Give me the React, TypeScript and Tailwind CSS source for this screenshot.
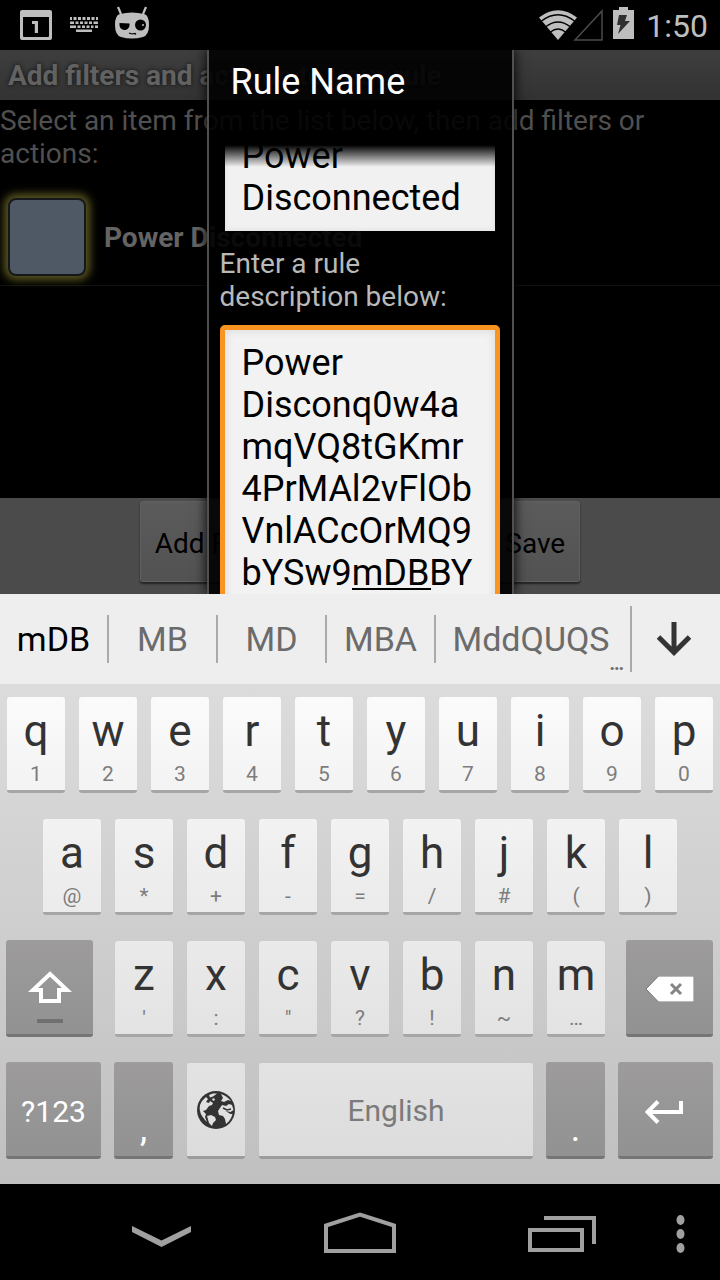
import type { ReactNode } from 'react';

const topRow = [['q', '1'], ['w', '2'], ['e', '3'], ['r', '4'], ['t', '5'], ['y', '6'], ['u', '7'], ['i', '8'], ['o', '9'], ['p', '0']];
const homeRow = [['a', '@'], ['s', '*'], ['d', '+'], ['f', '-'], ['g', '='], ['h', '/'], ['j', '#'], ['k', '('], ['l', ')']];
const bottomRow = [['z', "'"], ['x', ':'], ['c', '"'], ['v', '?'], ['b', '!'], ['n', '~'], ['m', '…']];

function LetterKey({ main, hint, tone }: { main: string; hint: string; tone: string }) {
  return (
    <div className="col-span-2 px-[7px]">
      <button className={`flex h-24 w-full flex-col items-center rounded-[3px] border-b-[3px] border-[#a6a6a6] pt-1 text-[#333] ${tone}`}>
        <span className="text-[44px] leading-[60px]">{main}</span>
        <span className="text-[21px] leading-[26px] text-[#7d7d7d]">{hint}</span>
      </button>
    </div>
  );
}

function DarkKey({ label, className, children }: { label: string; className: string; children: ReactNode }) {
  return (
    <div className={className}>
      <button
        aria-label={label}
        className="-mt-px flex h-[97px] w-full items-center justify-center rounded-[3px] border-b-[3px] border-[#757575] bg-linear-to-b from-[#9d9b9b] to-[#929292] pt-1 text-white"
      >
        {children}
      </button>
    </div>
  );
}

function FooterButton({ children }: { children: ReactNode }) {
  return (
    <button className="h-[81px] rounded-[3px] border border-[#606060] bg-linear-to-b from-[#5b5b5b] to-[#525252] px-3.5 pt-1 text-[28px] text-black shadow-[0_2px_2px_#222]">
      {children}
    </button>
  );
}

function StatusBar() {
  return (
    <header className="flex h-[50px] items-center bg-black pl-5 pr-3 text-[#bebebe]">
      <svg width="32" height="30" viewBox="0 0 32 30" fill="currentColor">
        <path fillRule="evenodd" d="M2 0h28a2 2 0 0 1 2 2v26a2 2 0 0 1-2 2H2a2 2 0 0 1-2-2V2a2 2 0 0 1 2-2Zm1 7v19a1 1 0 0 0 1 1h24a1 1 0 0 0 1-1V7Z" />
        <path d="M12 11h6v12h-3.200V14H12Z" />
      </svg>
      <svg className="ml-[18px]" width="28" height="16" viewBox="0 0 28 16" fill="currentColor">
        <path d="M0 0h2v3H0zM3.500 0h3v3h-3zM8 0h3v3H8zM12.500 0h3v3h-3zM17 0h3v3h-3zM21.500 0h3v3h-3zM26 0h2v3h-2zM0 4.500h4v2.500H0zM5.500 4.500h3V7h-3zM10 4.500h3V7h-3zM14.500 4.500h3V7h-3zM19 4.500h3V7h-3zM23.500 4.500H28V7h-4.500zM0 8.500h6V11H0zM7.500 8.500h3V11h-3zM12 8.500h3V11h-3zM16.500 8.500h3V11h-3zM21 8.500h2.500V11H21zM25 8.500h3V11h-3zM6 12.500h16V15H6z" />
      </svg>
      <svg className="-mt-1 ml-4" width="36" height="34" viewBox="0 0 36 34" fill="none">
        <path d="M4 1l3 7M32 1l-3 7" stroke="currentColor" strokeWidth="2.200" />
        <path d="M6 8Q18 5 30 8Q35 9 35 19Q35 29 29 31Q18 34 7 31Q1 29 1 19Q1 9 6 8Z" fill="currentColor" />
        <path d="M5.500 17l10 .5a5 5.500 0 0 1-10 2Z" fill="#000" />
        <circle cx="26.500" cy="19" r="5.500" fill="#000" />
        <circle cx="29" cy="19" r="1" fill="currentColor" />
        <path d="M15 27l3 1 3-.5 1 1" stroke="#000" strokeWidth="1.200" />
      </svg>
      <div className="flex-1" />
      <svg width="38" height="30" viewBox="0 0 38 30" fill="currentColor">
        <path d="M19 30 0 7.500Q19-7 38 7.500Z" />
        <path d="M2.500 11Q19-1.500 35.500 11M7 16.500Q19 7.500 31 16.500M11.500 22Q19 16 26.500 22" fill="none" stroke="#000" strokeWidth="1.500" />
      </svg>
      <svg className="-ml-1" width="30" height="32" viewBox="0 0 30 32" fill="none">
        <path d="M2 31 29 2v29Z" stroke="#4a4a4a" strokeWidth="1.500" />
      </svg>
      <svg className="-mt-1 ml-2.5" width="21" height="32" viewBox="0 0 21 32">
        <path d="M6 0h9v3h6v29H0V3h6Z" fill="currentColor" />
        <path d="M6 8h8l-2 6h5L5 27l2.500-9H4Z" fill="#303030" />
      </svg>
      <time className="ml-3 pt-0.5 text-[32px] leading-10">1:50</time>
    </header>
  );
}

export default function App() {
  return (
    <div className="flex min-h-screen flex-col bg-black font-[Roboto,sans-serif]">
      <StatusBar />

      <main className="relative flex flex-1 flex-col overflow-hidden">
        <h1 className="h-[50px] overflow-hidden whitespace-nowrap bg-linear-to-b from-[#3e3e3e] to-[#323232] px-2 text-[28px] font-bold leading-[52px] text-[#626262] [text-shadow:0_0_4px_#111]">
          Add filters and actions to your rule
        </h1>
        <p className="mt-1 text-[28px] leading-[33px] text-[#505050]">
          Select an item from the list below, then add filters or actions:
        </p>
        <div className="mt-5 flex items-end gap-2.5 border-b border-[#121212] pb-px">
          <div className="p-2">
            <div className="size-[78px] rounded-lg border-2 border-[#15181b] bg-[#4f5965] shadow-[0_0_9px_4px_#5c5820]" />
          </div>
          <span className="pb-[30px] text-[28px] font-bold leading-[33px] text-[#646464]">Power Disconnected</span>
        </div>
        <div className="flex-1" />
        <div className="flex h-24 items-start justify-center gap-[17px] bg-[#4b4b4b] pt-[3px]">
          <FooterButton>Add Filter</FooterButton>
          <FooterButton>Add Action</FooterButton>
          <FooterButton>Save</FooterButton>
        </div>

        <div className="absolute inset-0 flex justify-center">
          <section
            role="dialog"
            aria-labelledby="dialog-title"
            className="flex w-[307px] flex-col border-x-2 border-[#505050] bg-black/90 shadow-[0_0_12px_#000]"
          >
            <h2 id="dialog-title" className="h-[95px] px-[22px] pt-[11px] text-[36px] leading-[42px] text-white">Rule Name</h2>
            <div className="relative min-h-0 flex-1 overflow-hidden px-[11px]">
              <textarea
                aria-label="Rule name"
                className="-mt-[22px] ml-[5px] block h-[108px] w-[270px] resize-none overflow-hidden bg-[#f1f1f1] px-[17px] py-3 text-[36px] leading-[42px] text-black shadow-[inset_0_0_6px_#ddd]"
                defaultValue={'Power\nDisconnected'}
              />
              <div className="absolute inset-x-0 top-0 h-[22px] bg-linear-to-b from-black to-transparent" />
              <label htmlFor="description" className="mt-4 block text-[28px] leading-[33px] text-[#b9b9b9]">
                Enter a rule description below:
              </label>
              <div className="relative mt-3">
                <textarea
                  id="description"
                  className="block h-[600px] w-[280px] resize-none overflow-hidden whitespace-pre rounded-[5px] border-[5px] border-[#fa9420] bg-[#f2f2f2] px-[17px] py-3 text-[36px] leading-[42px] text-black shadow-[inset_0_0_8px_#d5d5d5] outline-none"
                  defaultValue={'Power\nDisconq0w4a\nmqVQ8tGKmr\n4PrMAl2vFlOb\nVnlACcOrMQ9\nbYSw9mDBBY'}
                />
                <div className="absolute left-[132px] top-[263px] h-0.5 w-[79px] bg-black" />
              </div>
            </div>
          </section>
        </div>
      </main>

      <section aria-label="Keyboard">
        <div className="grid h-[90px] grid-cols-[107fr_109fr_109fr_109fr_196fr_90fr] items-center bg-[#eee] text-[34px] leading-[48px] text-[#6b6b6b]">
          <button className="h-12 text-black">mDB</button>
          <button className="h-12 border-l-2 border-[#aaa]">MB</button>
          <button className="h-12 border-l-2 border-[#aaa]">MD</button>
          <button className="h-12 border-l-2 border-[#aaa]">MBA</button>
          <div className="relative">
            <button className="block h-12 w-full border-l-2 border-[#aaa] pr-1">MddQUQS</button>
            <span className="absolute -bottom-3 right-1.5 text-[20px] font-bold leading-6">…</span>
          </div>
          <button aria-label="Hide suggestions" className="flex h-[66px] items-center justify-center border-l-2 border-[#aaa] pr-1">
            <svg width="36" height="36" viewBox="0 0 36 36" fill="none" stroke="#333" strokeWidth="5">
              <path d="M18 1v30M2.500 16 18 31.500 33.500 16" />
            </svg>
          </button>
        </div>

        <div className="flex flex-col gap-[26px] bg-linear-to-b from-[#dcdcdc] to-[#c0c0c0] pb-[25px] pt-[13px]">
          <div className="grid h-24 grid-cols-20">
            {topRow.map(([main, hint]) => (
              <LetterKey key={main} main={main} hint={hint} tone="bg-linear-to-b from-[#fbfbfb] to-[#f3f3f3]" />
            ))}
          </div>
          <div className="grid h-24 grid-cols-20">
            <div />
            {homeRow.map(([main, hint]) => (
              <LetterKey key={main} main={main} hint={hint} tone="bg-linear-to-b from-[#f2f2f2] to-[#ebebeb]" />
            ))}
          </div>
          <div className="grid h-24 grid-cols-20">
            <DarkKey label="Shift" className="col-span-3 pl-1.5 pr-[15px]">
              <svg width="44" height="74" viewBox="0 0 44 74" fill="none">
                <path d="M22 22 39 38H31V49H13V38H5Z" stroke="#fff" strokeWidth="4" />
                <path d="M9 67h26v4H9z" fill="#707070" />
              </svg>
            </DarkKey>
            {bottomRow.map(([main, hint]) => (
              <LetterKey key={main} main={main} hint={hint} tone="bg-linear-to-b from-[#eaeaea] to-[#e3e3e3]" />
            ))}
            <DarkKey label="Delete" className="col-span-3 pl-3.5 pr-[7px]">
              <svg width="48" height="26" viewBox="0 0 48 26">
                <path d="M0 13 12.500 0H48v26H12.500Z" fill="#fff" stroke="#777" strokeWidth="1" />
                <path d="m25 8 10 10M35 8 25 18" stroke="#858585" strokeWidth="3" />
              </svg>
            </DarkKey>
          </div>
          <div className="grid h-24 grid-cols-20">
            <DarkKey label="Symbols" className="col-span-3 pl-1.5 pr-[7px]">
              <span className="text-[30px]">?123</span>
            </DarkKey>
            <DarkKey label="Comma" className="col-span-2 pl-1.5 pr-[7px]">
              <span className="pt-9 text-[36px]">,</span>
            </DarkKey>
            <div className="col-span-2 px-[7px]">
              <button aria-label="Change language" className="flex h-24 w-full items-center justify-center rounded-[3px] border-b-[3px] border-[#9c9c9c] bg-linear-to-b from-[#e3e3e3] to-[#dcdcdc]">
                <svg width="38" height="38" viewBox="0 0 38 38">
                  <circle cx="19" cy="19" r="19" fill="#333" />
                  <g fill="#e0e0e0">
                    <path d="M3 14Q5 9 9 6l2 2-2 3 3 1 1-2 3 2-1 2-3 1-3 4-3 1 3 3-1 3 2 5Q5 26 3.500 22Q2 18 3 14Z" />
                    <path d="M12 4l4-1.500h4l-4 3-3 1ZM15 8l2-1 1 2-2 1Z" />
                    <path d="M10 25l4-1 4 2 1 3-3 3-1 3-3-3Z" />
                    <path d="M24 3Q30 5 34 10l-3-1-4 2-3-1 2-3Z" />
                    <path d="M25 14l4 1 3-2 3 1 1.500 5-3 2-5-1 5 3h2Q34 29 29 33l-1-5-2-3-4-1-1-4 2-3Z" />
                  </g>
                  <path d="M26 17l4 2 4-1" fill="none" stroke="#333" strokeWidth="1.500" />
                </svg>
              </button>
            </div>
            <div className="col-span-8 px-[7px]">
              <button className="h-24 w-full rounded-[3px] border-b-[3px] border-[#9c9c9c] bg-linear-to-b from-[#e3e3e3] to-[#dcdcdc] pt-0.5 text-[30px] text-[#7b7b7b]">English</button>
            </div>
            <DarkKey label="Period" className="col-span-2 pl-1.5 pr-[7px]">
              <span className="pt-9 text-[36px]">.</span>
            </DarkKey>
            <DarkKey label="Enter" className="col-span-3 pl-1.5 pr-[7px]">
              <svg width="42" height="26" viewBox="0 0 42 26" fill="none" stroke="#fff" strokeWidth="4">
                <path d="M36 3v11H3M13 3.500 2.500 14 13 24.500" />
              </svg>
            </DarkKey>
          </div>
        </div>
      </section>

      <nav className="flex h-24 items-center bg-black pl-[132px] pr-[35px] text-[#a0a0a0]">
        <button aria-label="Hide keyboard" className="pt-2">
          <svg width="59" height="22" viewBox="0 0 59 22" fill="currentColor">
            <path d="M0 1v6l29.500 15L59 7V1L29.500 15.500Z" />
          </svg>
        </button>
        <div className="flex-1" />
        <button aria-label="Home" className="pt-1">
          <svg width="72" height="45" viewBox="0 0 72 45" fill="none" stroke="currentColor" strokeWidth="4">
            <path d="M2 39V13.500L36 2.500 70 13.500V39Z" />
          </svg>
        </button>
        <div className="flex-1" />
        <button aria-label="Recent apps" className="pt-1">
          <svg width="68" height="40" viewBox="0 0 68 40" fill="none" stroke="currentColor" strokeWidth="4">
            <path d="M2 16h52v20H2ZM16 4h50v26" />
          </svg>
        </button>
        <button aria-label="More options" className="ml-20 pt-1">
          <svg width="9" height="38" viewBox="0 0 9 38" fill="currentColor">
            <ellipse cx="4.500" cy="5" rx="4" ry="5" />
            <ellipse cx="4.500" cy="19" rx="4" ry="5" />
            <ellipse cx="4.500" cy="33" rx="4" ry="5" />
          </svg>
        </button>
      </nav>
    </div>
  );
}
